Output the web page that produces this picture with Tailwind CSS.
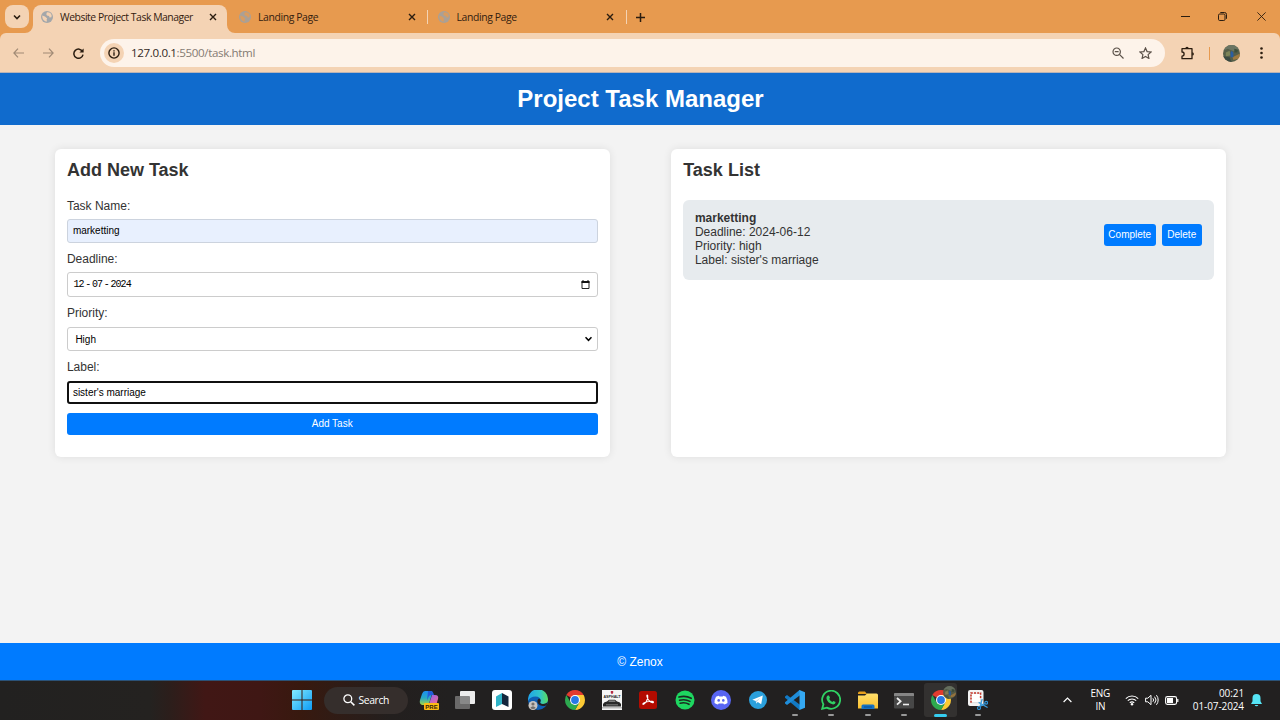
<!DOCTYPE html>
<html lang="en">
<head>
<meta charset="utf-8">
<title>Website Project Task Manager</title>
<script src="https://cdn.jsdelivr.net/npm/@tailwindcss/browser@4"></script>
</head>
<body class="w-[1280px] h-[720px] overflow-hidden flex flex-col bg-[#f3f3f3] font-['Liberation_Sans',Arial,sans-serif] text-[12px] leading-[14px] text-[#333]">

<svg class="absolute w-0 h-0">
  <defs>
    <linearGradient id="win" x1="0" y1="0" x2="1" y2="1"><stop offset="0" stop-color="#84ecff"/><stop offset="1" stop-color="#0d9bf5"/></linearGradient>
    <linearGradient id="cop" x1="0" y1="0" x2="0" y2="1"><stop offset="0" stop-color="#1c8df0"/><stop offset=".5" stop-color="#27a9c4"/><stop offset="1" stop-color="#a5d544"/></linearGradient>
    <linearGradient id="cop2" x1="0" y1="0" x2="1" y2="1"><stop offset="0" stop-color="#8c62f0"/><stop offset="1" stop-color="#f56a8d"/></linearGradient>
    <linearGradient id="edge1" x1="0" y1="0" x2="1" y2="0"><stop offset="0" stop-color="#20a4e8"/><stop offset=".6" stop-color="#30c6c8"/><stop offset="1" stop-color="#5bdc5a"/></linearGradient>
    <linearGradient id="folder" x1="0" y1="0" x2="0" y2="1"><stop offset="0" stop-color="#ffdf6b"/><stop offset="1" stop-color="#fbc02f"/></linearGradient>
    <clipPath id="avc"><circle cx="9" cy="9" r="9"/></clipPath>
    <symbol id="globe" viewBox="0 0 12 12">
      <circle cx="6" cy="6" r="6" fill="#a3a7aa"/>
      <path d="M1.3 4.6 4 5.6 6.2 7.4 5.6 8.6 6 10.6C3 10.6 1 8 1.3 4.6Z M5.8 1.4C8.2 1 10 2.2 10.7 4.4L10.4 6.2 8.6 6.6 8 5 6 4.4 5.3 3.2Z" fill="#f4d3b4"/>
    </symbol>
    <symbol id="globe2" viewBox="0 0 12 12">
      <circle cx="6" cy="6" r="6" fill="#aaa096"/>
      <path d="M1.3 4.6 4 5.6 6.2 7.4 5.6 8.6 6 10.6C3 10.6 1 8 1.3 4.6Z M5.8 1.4C8.2 1 10 2.2 10.7 4.4L10.4 6.2 8.6 6.6 8 5 6 4.4 5.3 3.2Z" fill="#d99c60"/>
    </symbol>
    <symbol id="x" viewBox="0 0 8 8"><path d="M1 1 7 7M7 1 1 7" stroke="#2b1d10" stroke-width="1.4" fill="none"/></symbol>
    <symbol id="chrome" viewBox="0 0 20 20">
      <path d="M10 10 1.34 5A10 10 0 0 1 18.66 5Z" fill="#e33b2e"/>
      <path d="M10 5H18.66A10 10 0 0 1 10 20L14.33 12.5Z" fill="#fcc934"/>
      <path d="M1.34 5 5.67 12.5 10 15 14.33 12.5 10 20A10 10 0 0 1 1.34 5Z" fill="#2da94f"/>
      <circle cx="10" cy="10" r="5" fill="#fff"/><circle cx="10" cy="10" r="3.9" fill="#2878e6"/>
    </symbol>
    <symbol id="avatar" viewBox="0 0 18 18">
      <g clip-path="url(#avc)"><rect width="18" height="18" fill="#565f49"/><path d="M0 0H18V5L12 7 5 4 0 6Z" fill="#6b7563"/><path d="M3 8 7 6 8 11 3 12Z" fill="#7d8458"/><path d="M10 13 18 9V14L11 16Z" fill="#a07a3f"/><path d="M0 12 7 13 9 18H0Z" fill="#3b4a42"/><path d="M9 6 11 8 11 13 8 13 8 8Z" fill="#2c5ea0"/><path d="M12 4 16 5 15 8 12 8Z" fill="#3c4e3a"/></g>
    </symbol>
  </defs>
</svg>

<!-- Browser tab strip -->
<div class="h-[33px] shrink-0 bg-[#e79a4f] flex items-end font-['Open_Sans','Noto_Sans',sans-serif] text-[10.4px] tracking-[-0.46px] text-[#33200f]">
  <div class="w-[33px] h-[33px] pl-[5px] pt-[5px]">
    <div class="w-6 h-[23px] rounded-[8px] bg-[#f4d3b4] flex items-center justify-center">
      <svg class="w-2 h-2" viewBox="0 0 8 8"><path d="M1 2.5 4 5.5 7 2.5" fill="none" stroke="#2b1d10" stroke-width="1.6"/></svg>
    </div>
  </div>
  <div class="relative w-[194px] h-7 rounded-t-[8px] bg-[#f4d3b4] flex items-center pl-2 pr-[9.6px] pb-1">
    <svg class="absolute -left-2 bottom-0 w-2 h-2" viewBox="0 0 8 8"><path d="M8 0V8H0A8 8 0 0 0 8 0Z" fill="#f4d3b4"/></svg>
    <svg class="absolute -right-2 bottom-0 w-2 h-2" viewBox="0 0 8 8"><path d="M0 0V8H8A8 8 0 0 1 0 0Z" fill="#f4d3b4"/></svg>
    <svg class="w-3 h-3 mr-[7px]"><use href="#globe"/></svg>
    <span class="grow whitespace-nowrap">Website Project Task Manager</span>
    <svg class="w-2 h-2"><use href="#x"/></svg>
  </div>
  <div class="w-[201px] h-7 flex items-center pl-[12px] pb-1">
    <svg class="w-3 h-3 mr-[7px]"><use href="#globe2"/></svg>
    <span class="grow whitespace-nowrap tracking-[-0.38px]">Landing Page</span>
    <svg class="w-2 h-2 mr-[11px]"><use href="#x"/></svg>
    <div class="w-[1.5px] h-3.5 bg-[#f4d3b4]"></div>
  </div>
  <div class="w-[199px] h-7 flex items-center pl-[9.5px] pb-1">
    <svg class="w-3 h-3 mr-[7px]"><use href="#globe2"/></svg>
    <span class="grow whitespace-nowrap tracking-[-0.38px]">Landing Page</span>
    <svg class="w-2 h-2 mr-[12px]"><use href="#x"/></svg>
    <div class="w-[1.5px] h-3.5 bg-[#f4d3b4]"></div>
  </div>
  <div class="h-7 flex items-center pl-[9px] pb-1"><svg class="w-[9px] h-[9px]" viewBox="0 0 9 9"><path d="M4.5 0V9M0 4.5H9" stroke="#2b1d10" stroke-width="1.5"/></svg></div>
  <div class="ml-auto h-7 flex items-center pr-[14.5px] pb-[5px]">
    <svg class="w-[9px] h-[9px] mr-[28px]" viewBox="0 0 9 9"><path d="M0 4.5H9" stroke="#2b1d10"/></svg>
    <svg class="w-[9px] h-[9px] mr-[30px]" viewBox="0 0 9 9"><rect x=".5" y="2" width="6.5" height="6.5" rx="1.2" fill="none" stroke="#2b1d10"/><path d="M2.3.5H6.5A2 2 0 0 1 8.5 2.5V6.8" fill="none" stroke="#2b1d10"/></svg>
    <svg class="w-[9px] h-[9px]" viewBox="0 0 9 9"><path d="M.4.4 8.6 8.6M8.6.4.4 8.6" stroke="#2b1d10" stroke-width=".9"/></svg>
  </div>
</div>

<!-- Toolbar -->
<div class="shrink-0 h-10 bg-[#e79a4f]">
<div class="h-10 bg-[#f4d3b4] rounded-t-[6px] flex items-center border-b border-[#b9b3b6] pt-px font-['Open_Sans','Noto_Sans',sans-serif]">
  <svg class="ml-[13px] w-[11px] h-[10px]" viewBox="0 0 11 10"><path d="M5 .7.9 5 5 9.3M1 5H11" fill="none" stroke="#a08a75" stroke-width="1.2"/></svg>
  <svg class="ml-[19px] w-[11px] h-[10px]" viewBox="0 0 11 10"><path d="M6 .7 10.1 5 6 9.3M10 5H0" fill="none" stroke="#a08a75" stroke-width="1.2"/></svg>
  <svg class="ml-[19px] w-[11px] h-[11px]" viewBox="0 0 11 11"><path d="M9.6 3.6A4.6 4.6 0 1 0 10 6.6" fill="none" stroke="#2b1d10" stroke-width="1.5"/><path d="M10.6.4V4.6H6.4Z" fill="#2b1d10"/></svg>
  <div class="ml-4 w-[1065px] h-7 rounded-full bg-[#fdf3ea] flex items-center pl-1 pr-[13px]">
    <div class="w-5 h-5 rounded-full bg-[#f4d3b4] flex items-center justify-center">
      <svg class="w-3 h-3" viewBox="0 0 12 12"><circle cx="6" cy="6" r="5.1" fill="none" stroke="#2b1d10" stroke-width="1.4"/><path d="M6 5.3V8.8M6 3.2V4.5" stroke="#2b1d10" stroke-width="1.4"/></svg>
    </div>
    <span class="ml-[7px] grow text-[11.6px] tracking-[-0.37px] text-[#857b73]"><span class="text-[#33281f]">127.0.0.1</span>:5500/task.html</span>
    <svg class="w-3 h-3 mr-[15px]" viewBox="0 0 12 12"><circle cx="4.7" cy="4.7" r="3.7" fill="none" stroke="#5b5149" stroke-width="1.2"/><path d="M7.4 7.4 11.5 11.5M2.8 4.7H6.6" stroke="#5b5149" stroke-width="1.2"/></svg>
    <svg class="w-[13px] h-3" viewBox="0 0 13 12"><path d="M6.5 1 8.1 4.6 12 5 9.1 7.6 9.9 11.4 6.5 9.4 3.1 11.4 3.9 7.6 1 5 4.9 4.6Z" fill="none" stroke="#5b5149" stroke-width="1.2"/></svg>
  </div>
  <svg class="ml-[15px] w-[15px] h-[14px]" viewBox="0 0 15 14"><path d="M2 2.7H12V12.7H2V10.2A2.1 2.1 0 0 0 2 6V2.7Z" fill="none" stroke="#2b1d10" stroke-width="1.3" stroke-linejoin="round"/><path d="M5.3 2.5A1.7 1.7 0 0 1 8.7 2.5ZM12.2 6.2A1.7 1.7 0 0 1 12.2 9.6Z" fill="#2b1d10"/></svg>
  <div class="ml-[14px] w-px h-[13px] bg-[#e79a4f]"></div>
  <svg class="ml-[13px] w-[17px] h-[17px]"><use href="#avatar"/></svg>
  <svg class="ml-[20px] w-[3px] h-[12px]" viewBox="0 0 3 12"><circle cx="1.5" cy="1.5" r="1.3" fill="#2b1d10"/><circle cx="1.5" cy="6" r="1.3" fill="#2b1d10"/><circle cx="1.5" cy="10.5" r="1.3" fill="#2b1d10"/></svg>
</div>
</div>

<!-- Page -->
<header class="shrink-0 h-[52px] pb-px bg-[#106bcd] flex items-center justify-center"><h1 class="pl-px text-white font-bold text-[24px] leading-7">Project Task Manager</h1></header>
<main class="grow min-h-0 flex justify-between items-start pt-6 px-[54.5px]">
  <section class="w-[555px] h-[308px] bg-white rounded-[6px] pl-[12.4px] pr-3 pt-[11px] shadow-[0_0_8px_rgba(0,0,0,0.09)]">
    <h2 class="font-bold text-[18px] leading-[21px] mb-[18px]">Add New Task</h2>
    <label class="block mb-[6px]">Task Name:</label>
    <div class="h-[23.5px] pt-px mb-[9.5px] border border-[#ccd3de] rounded-[3px] bg-[#e8f0fe] px-[5px] flex items-center text-[10px] text-black">marketting</div>
    <label class="block mb-1.5">Deadline:</label>
    <div class="h-[25px] mb-[9.5px] border border-[#ccc] rounded-[3px] pl-[5.5px] pr-[6px] flex items-center justify-between text-black">
      <div class="flex gap-[1.6px] font-['Liberation_Mono',monospace] text-[10px] tracking-[-0.9px] pt-px"><span>12</span><span>-</span><span>07</span><span>-</span><span>2024</span></div>
      <svg class="w-[9px] h-[9px] mr-px" viewBox="0 0 9 9"><path d="M1 1.5H8V8.5H1Z" fill="none" stroke="#222"/><path d="M.5 1H8.5V3H.5ZM1.5 0H2.5V1.5H1.5ZM6.5 0H7.5V1.5H6.5Z" fill="#111"/></svg>
    </div>
    <label class="block mb-1.5 -mt-px">Priority:</label>
    <div class="h-[24.5px] mt-[7px] pt-px mb-[9.5px] border border-[#ccc] rounded-[3px] pl-[7.5px] pr-[4.5px] flex items-center justify-between text-[10px] text-black"><span class="pt-px">High</span>
      <svg class="w-[7px] h-[6px]" viewBox="0 0 7 6"><path d="M.5 1.2 3.5 4.3 6.5 1.2" fill="none" stroke="#000" stroke-width="1.5"/></svg>
    </div>
    <label class="block mb-1.5 -mt-px">Label:</label>
    <div class="h-[23.5px] mt-[7px] pt-px mb-[9px] border-2 border-[#101010] rounded-[3px] px-[4px] flex items-center text-[10px] text-black">sister's marriage</div>
    <div class="h-[22px] rounded-[3px] bg-[#007bff] flex items-center justify-center text-[10px] text-white">Add Task</div>
  </section>
  <section class="w-[555px] h-[308px] bg-white rounded-[6px] pl-[12.4px] pr-3 pt-[11px] shadow-[0_0_8px_rgba(0,0,0,0.09)]">
    <h2 class="font-bold text-[18px] leading-[21px] mb-[18.5px] pl-[.3px]">Task List</h2>
    <div class="h-20 rounded-[6px] bg-[#e7ebee] px-3 flex">
      <div class="grow pt-[11.5px]"><b>marketting</b><br>Deadline: 2024-06-12<br>Priority: high<br>Label: sister's marriage</div>
      <div class="flex gap-1.5 pt-[24.5px] text-[10px] text-white">
        <div class="w-[52.5px] h-[22px] rounded-[3px] bg-[#007bff] flex items-center justify-center">Complete</div>
        <div class="w-[39.5px] h-[22px] rounded-[3px] bg-[#007bff] flex items-center justify-center">Delete</div>
      </div>
    </div>
  </section>
</main>
<footer class="shrink-0 h-[37px] bg-[#007bff] text-white flex items-center justify-center">© Zenox</footer>

<!-- Taskbar -->
<div class="shrink-0 h-10 border-t border-[#2b5277] pb-px bg-[linear-gradient(90deg,#222120_0,#242220_150px,#2c1e1b_170px,#411715_205px,#3f1714_260px,#38190f_300px,#231f1e_390px,#222020_450px)] flex items-center font-['Open_Sans','Noto_Sans',sans-serif] text-white">
  <svg class="ml-[291.5px] w-5 h-5" viewBox="0 0 20 20"><path d="M0 1A1 1 0 0 1 1 0H9.5V9.5H0ZM10.5 0H19A1 1 0 0 1 20 1V9.5H10.5ZM0 10.5H9.5V20H1A1 1 0 0 1 0 19ZM10.5 10.5H20V19A1 1 0 0 1 19 20H10.5Z" fill="url(#win)"/></svg>
  <div class="ml-3 w-[84px] h-[27px] rounded-full bg-[#352e2c] flex items-center pl-[19px] text-[10.4px] tracking-[-0.4px]">
    <svg class="w-3 h-3 mr-[4px]" viewBox="0 0 12 12"><circle cx="4.8" cy="4.8" r="3.9" fill="none" stroke="#fff" stroke-width="1.3"/><path d="M7.7 7.7 11.4 11.4" stroke="#fff" stroke-width="1.5"/></svg>Search
  </div>
  <div class="ml-[2.8px] flex">
    <div class="w-[36.6px] h-[39px] flex items-center justify-center"><svg class="w-5 h-5" viewBox="0 0 20 20"><path d="M6 1H12Q14 1 13 4L10.5 12Q9.5 15 7 15H3Q0 14 1 10L3 4Q4 1 6 1Z" fill="url(#cop)"/><path d="M9 1H12Q14 1 14.7 4L15 5H12Q10 5 9 8L8 11Z" fill="#235cd8"/><path d="M13 5H16Q20 5 19 9L17.5 14H10Z" fill="url(#cop2)"/><rect x="5" y="13" width="15" height="7" rx="1" fill="#fdbc13"/><text x="12.5" y="18.8" text-anchor="middle" font-size="6" font-weight="bold" font-family="Liberation Sans" fill="#33230b">PRE</text></svg></div>
    <div class="w-[36.6px] h-[39px] flex items-center justify-center"><svg class="w-5 h-5" viewBox="0 0 20 20"><rect x="5" y="1" width="15" height="13" rx="1" fill="#ececec"/><rect x="0" y="6" width="15" height="13" rx="1" fill="#777" fill-opacity=".85"/></svg></div>
    <div class="w-[36.6px] h-[39px] flex items-center justify-center"><svg class="w-5 h-5" viewBox="0 0 20 20"><rect width="20" height="20" rx="3" fill="#fff"/><path d="M4 6.5 10 3V14L4 17Z" fill="#2fb3c7"/><path d="M10 3 16.5 6.5V17L10 14Z" fill="#13263d"/></svg></div>
    <div class="w-[36.6px] h-[39px] flex items-center justify-center"><svg class="w-5 h-5" viewBox="0 0 20 20"><circle cx="10" cy="10" r="10" fill="#0f5fb4"/><path d="M0 9A10 10 0 0 1 20 9.5C20 12.5 17.5 14 15 14 12.5 14 11.7 12.8 12.5 11.5 13.5 9.5 11.5 6.5 7.5 6.5 4 6.5 1 8 0 11Z" fill="url(#edge1)"/><path d="M12.5 11.5C11.7 12.8 12.5 14 15 14 17 14 18.6 13.2 19.2 12.6L19 14.4 17 16C14 16.5 10 15 9.4 12 9.2 10.5 10 9.2 11 8.6 12.5 9.4 13 10.3 12.5 11.5Z" fill="#222020"/><circle cx="5" cy="15.5" r="4.5" fill="#c9c5c2"/><circle cx="5" cy="14" r="1.6" fill="#74706d"/><path d="M2.2 18Q5 14.4 7.8 18Q5 20 2.2 18Z" fill="#74706d"/></svg></div>
    <div class="w-[36.6px] h-[39px] flex items-center justify-center"><svg class="w-5 h-5"><use href="#chrome"/></svg></div>
    <div class="w-[36.6px] h-[39px] flex items-center justify-center"><svg class="w-5 h-5" viewBox="0 0 20 20"><rect width="20" height="20" fill="#f5f5f5"/><path d="M8.8 1H11.2V3L10 4.2 8.8 3Z" fill="#b72b45"/><text x="10" y="7.6" text-anchor="middle" font-size="3.7" font-weight="bold" font-family="Liberation Sans" fill="#222">ASPHALT</text><path d="M1 14Q2 11.5 5 11.5L7 9.8H13L15 11.5Q18 11.5 19 14V16.5H1Z" fill="#292929"/><path d="M7.2 10.6H12.8L13.6 11.8H6.4ZM4 14.5H16V15.3H4Z" fill="#999"/><path d="M0 17H20V18.5H0Z" fill="#bbb"/></svg></div>
    <div class="w-[36.6px] h-[39px] flex items-center justify-center"><svg class="w-[18px] h-[18px]" viewBox="0 0 18 18"><rect width="18" height="18" rx="2.5" fill="#b30b00"/><path d="M4 13.3C5.5 13.8 9.7 8.4 8.7 4.6 8.4 3.6 7.5 4.2 8 5.7 8.8 8.6 11 11.2 13.5 11.6 15 11.8 14.8 10.3 13 10.2 10 10.1 6.5 10.9 4.7 12 4 12.4 3.6 13 4 13.3Z" fill="none" stroke="#fff" stroke-width="1.1"/></svg></div>
    <div class="w-[36.6px] h-[39px] flex items-center justify-center"><svg class="w-5 h-5" viewBox="0 0 20 20"><circle cx="10" cy="10" r="9.5" fill="#1ed760"/><path d="M4 7.1Q10.5 5.2 16.2 8.3M4.6 10.3Q10 8.7 15 11.4M5.2 13.2Q10 12 14 14.3" fill="none" stroke="#1b2a20" stroke-width="1.6" stroke-linecap="round"/></svg></div>
    <div class="w-[36.6px] h-[39px] flex items-center justify-center"><svg class="w-5 h-5" viewBox="0 0 20 20"><circle cx="10" cy="10" r="10" fill="#5865f2"/><path d="M7.8 5.7 8.3 6.4H11.7L12.2 5.7Q14 6 15 6.8 16.7 9.7 16.5 13 14.8 14.3 13 14.6L12.3 13.4H7.7L7 14.6Q5.2 14.3 3.5 13 3.3 9.7 5 6.8 6 6 7.8 5.7Z" fill="#fff"/><ellipse cx="7.7" cy="10.4" rx="1.3" ry="1.4" fill="#5865f2"/><ellipse cx="12.3" cy="10.4" rx="1.3" ry="1.4" fill="#5865f2"/></svg></div>
    <div class="w-[36.6px] h-[39px] flex items-center justify-center"><svg class="w-[18px] h-[18px]" viewBox="0 0 18 18"><circle cx="9" cy="9" r="9" fill="#2ba0dc"/><path d="M3.3 8.8 13.8 4.5 12.2 13.3 8.8 11 7.2 12.6 6.8 10Z" fill="#fff"/><path d="M6.8 10 11.8 6.5 7.9 10.6 7.2 12.6Z" fill="#b8d8ea"/></svg></div>
    <div class="relative w-[36.6px] h-[39px] flex items-center justify-center"><svg class="w-5 h-5" viewBox="0 0 20 20"><path d="M0 6.5 2 5 15 14.8V20H14.5L0 7.8Z" fill="#1279c4"/><path d="M0 13.5 2 15 15 5.2V0H14.5L0 12.2Z" fill="#1f8dda"/><path d="M14.5 0 20 2.3V17.7L14.5 20Z" fill="#35a9f3"/></svg><i class="absolute bottom-[3.5px] w-[6px] h-[2.5px] rounded-full bg-[#999]"></i></div>
    <div class="relative w-[36.6px] h-[39px] flex items-center justify-center"><svg class="w-5 h-5" viewBox="0 0 20 20"><path d="M1.2 18.8 2.4 14.3A9 9 0 1 1 5.8 17.6Z" fill="none" stroke="#30d163" stroke-width="1.8"/><path d="M6.8 5.5H8L9 7.8 8.2 9Q9.3 11.2 11.3 12L12.4 10.9 14.6 12Q14.6 14.4 12.2 14.5 6 13.2 5.4 8 5.5 6.2 6.8 5.5Z" fill="#30d163"/></svg><i class="absolute bottom-[3.5px] w-[6px] h-[2.5px] rounded-full bg-[#999]"></i></div>
    <div class="relative w-[36.6px] h-[39px] flex items-center justify-center"><svg class="w-5 h-5" viewBox="0 0 20 20"><path d="M0 3A1.5 1.5 0 0 1 1.5 1.5H7L9 4H0Z" fill="#e7a01c"/><path d="M0 5.5H7L9 3.5H18.5A1.5 1.5 0 0 1 20 5V18.5H0Z" fill="url(#folder)"/><path d="M3.5 19V16A1.5 1.5 0 0 1 5 14.5H15A1.5 1.5 0 0 1 16.5 16V19Z" fill="#1572c4"/><path d="M6 17H14" stroke="#0d4d91"/></svg><i class="absolute bottom-[3.5px] w-[6px] h-[2.5px] rounded-full bg-[#999]"></i></div>
    <div class="relative w-[36.6px] h-[39px] flex items-center justify-center"><svg class="w-5 h-5" viewBox="0 0 20 20"><rect y="3" width="20" height="15.5" rx="1" fill="#474747"/><path d="M0 4A1 1 0 0 1 1 3H19A1 1 0 0 1 20 4V6H0Z" fill="#858585"/><path d="M3 8 6.6 11.3 3 14.6" fill="none" stroke="#eee" stroke-width="1.8"/><path d="M9 14.5H15" stroke="#eee" stroke-width="1.6"/></svg><i class="absolute bottom-[3.5px] w-[6px] h-[2.5px] rounded-full bg-[#999]"></i></div>
    <div class="relative w-[36.6px] h-[39px] flex items-center justify-center"><div class="w-[33px] h-[34px] rounded-[3px] bg-[#333130] flex items-center justify-center"><svg class="w-5 h-5"><use href="#chrome"/></svg></div><svg class="absolute w-[13px] h-[13px] left-[20px] top-[5px] opacity-90"><use href="#avatar"/></svg><i class="absolute bottom-[3px] w-[13px] h-[3px] rounded-full bg-[#36cdf0]"></i></div>
    <div class="relative w-[36.6px] h-[39px] flex items-center justify-center"><svg class="w-5 h-5" viewBox="0 0 20 20"><rect x="0" y="0" width="15.5" height="16" rx="2" fill="#f3f3f3"/><rect x="3" y="3.2" width="9.6" height="9.6" fill="#fff" stroke="#c9c9c9" stroke-width=".6"/><path d="M3 12.8V3H12.6V8" fill="none" stroke="#c63528" stroke-width="1.5" stroke-dasharray="2 1.2"/><path d="M14.2 9 12.2 16.2M19.6 17.5 10.6 12.4M17 13.5 12 16.5" stroke="#3b9cdc" stroke-width="1.3"/><circle cx="11" cy="18" r="1.5" fill="none" stroke="#2f93d8" stroke-width="1.2"/><circle cx="18.2" cy="12.8" r="1.4" fill="none" stroke="#2f93d8" stroke-width="1.2"/></svg><i class="absolute bottom-[3.5px] w-[6px] h-[2.5px] rounded-full bg-[#999]"></i></div>
  </div>
  <div class="ml-auto flex items-center pr-[18px] text-[10px] leading-[13px]">
    <svg class="w-[9px] h-[6px] mr-[17px]" viewBox="0 0 9 6"><path d="M.6 5 4.5 1 8.4 5" fill="none" stroke="#fff" stroke-width="1.2"/></svg>
    <div class="w-[22px] text-center mr-[14px] tracking-[-0.3px]">ENG<br>IN</div>
    <svg class="w-[14px] h-[12px] mr-[6px]" viewBox="0 0 14 12"><path d="M.8 4.6A8.8 8.8 0 0 1 13.2 4.6M2.8 6.7A6 6 0 0 1 11.2 6.7M4.8 8.8A3.1 3.1 0 0 1 9.2 8.8" fill="none" stroke="#fff" stroke-width="1.1"/><circle cx="7" cy="10.3" r="1.2" fill="#fff"/></svg>
    <svg class="w-[14px] h-[12px] mr-[6px]" viewBox="0 0 14 12"><path d="M.6 4.2H2.8L6 1.3V10.7L2.8 7.8H.6Z" fill="none" stroke="#fff"/><path d="M7.9 4.3A2.6 2.6 0 0 1 7.9 7.7M9.6 2.7A5 5 0 0 1 9.6 9.3M11.4 1.2A7.4 7.4 0 0 1 11.4 10.8" fill="none" stroke="#fff"/></svg>
    <svg class="w-[14px] h-[9px] mr-[13.5px]" viewBox="0 0 14 9"><rect x=".6" y=".6" width="11" height="7.8" rx="1.8" fill="none" stroke="#fff" stroke-width="1.1"/><rect x="2" y="2" width="6" height="5" fill="#fff"/><path d="M12.2 3H13.4V6H12.2Z" fill="#fff"/></svg>
    <div class="text-right mr-[7px] whitespace-nowrap tracking-[-0.1px]">00:21<br>01-07-2024</div>
    <svg class="w-[11px] h-[13px]" viewBox="0 0 11 13"><path d="M5.5 0A4 4 0 0 1 9.5 4V7.3L11 10H0L1.5 7.3V4A4 4 0 0 1 5.5 0ZM3.7 11H7.3A1.9 1.9 0 0 1 3.7 11Z" fill="#56e4f5"/></svg>
  </div>
</div>
</body>
</html>
